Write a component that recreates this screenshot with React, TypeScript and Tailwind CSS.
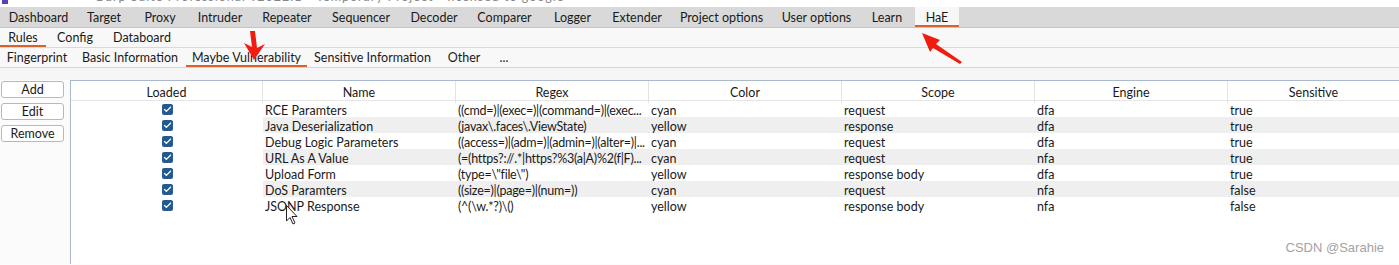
import { Check } from "lucide-react";

const mainTabs: [string, number][] = [
  ["Dashboard", 77],
  ["Target", 54],
  ["Proxy", 58],
  ["Intruder", 62],
  ["Repeater", 72],
  ["Sequencer", 76],
  ["Decoder", 70],
  ["Comparer", 71],
  ["Logger", 65],
  ["Extender", 64],
  ["Project options", 105],
  ["User options", 85],
  ["Learn", 56],
  ["HaE", 44],
];

const subTabs: [string, number][] = [
  ["Rules", 46],
  ["Config", 58],
  ["Databoard", 76],
];

const ruleTabs: [string, number][] = [
  ["Fingerprint", 74],
  ["Basic Information", 112],
  ["Maybe Vulnerability", 121],
  ["Sensitive Information", 131],
  ["Other", 52],
  ["...", 28],
];

const columns = ["Loaded", "Name", "Regex", "Color", "Scope", "Engine", "Sensitive"];

const rules = [
  ["RCE Paramters", "((cmd=)|(exec=)|(command=)|(exec...", "cyan", "request", "dfa", "true"],
  ["Java Deserialization", "(javax\\.faces\\.ViewState)", "yellow", "response", "dfa", "true"],
  ["Debug Logic Parameters", "((access=)|(adm=)|(admin=)|(alter=)|...", "cyan", "request", "dfa", "true"],
  ["URL As A Value", "(=(https?://.*|https?%3(a|A)%2(f|F)...", "cyan", "request", "nfa", "true"],
  ["Upload Form", "(type=\\\"file\\\")", "yellow", "response body", "dfa", "true"],
  ["DoS Paramters", "((size=)|(page=)|(num=))", "cyan", "request", "nfa", "false"],
  ["JSONP Response", "(^(\\w.*?)\\()", "yellow", "response body", "nfa", "false"],
];

const font = "font-['Segoe_UI','Lato',sans-serif]";

function TabRow({ tabs, active, className }: { tabs: [string, number][]; active: string; className: string }) {
  return (
    <div className={`flex ${className}`}>
      {tabs.map(([label, width]) => (
        <div
          key={label}
          className={`flex items-center justify-center border-b-2 pt-[4px] ${
            label === active ? "border-[#d9622b]" : "border-transparent"
          } ${label === "HaE" ? "bg-[#f7f7f7]" : ""}`}
          style={{ width }}
        >
          {label}
        </div>
      ))}
    </div>
  );
}

export default function App() {
  return (
    <div className={`relative h-[265px] w-[1399px] overflow-hidden bg-[#fcfcfc] text-[12.5px] text-[#1a1a1a] ${font}`}>
      <div className="h-[7px] overflow-hidden bg-white">
        <div className="-mt-[12px] flex items-center gap-2 pl-[2px] text-[#888]">
          <span className="inline-block h-[14px] w-[6px] bg-[#5b3fb5]" />
          <span className="pl-[80px] tracking-[1px]">Burp Suite Professional v2022.1 - Temporary Project - licensed to google</span>
        </div>
      </div>

      <TabRow tabs={mainTabs} active="HaE" className="h-[21px] border-b border-[#c4c4c4] bg-[#d9d9d9]" />
      <TabRow tabs={subTabs} active="Rules" className="h-[20px] border-b border-[#dadada] bg-[#f8f8f8]" />
      <TabRow tabs={ruleTabs} active="Maybe Vulnerability" className="h-[20px] border-b border-[#d6d6d6] bg-[#f8f8f8]" />

      <div className="h-[12px] bg-[#f6f6f6]" />

      <div className="flex h-[184px]">
        <div className="flex w-[70px] flex-col gap-[5px] bg-[#fbfbfb] pl-px pt-px">
          {["Add", "Edit", "Remove"].map((b) => (
            <button
              key={b}
              className="h-[17px] w-[63px] rounded-[3px] border border-[#b8b8b8] bg-white pt-px text-[12.5px] leading-none"
            >
              {b}
            </button>
          ))}
        </div>

        <div className="flex-1 border-l border-t border-[#a9b8cc] bg-white">
          <div className="grid h-[20px] grid-cols-[192px_193px_193px_193px_193px_193px_1fr] border-b border-[#e6e6e6]">
            {columns.map((c, i) => (
              <div
                key={c}
                className={`flex items-center justify-center pt-[3px] ${i < columns.length - 1 ? "border-r border-[#e3e3e3]" : ""}`}
              >
                {c}
              </div>
            ))}
          </div>
          {rules.map((r, idx) => (
            <div key={r[0]} className="grid h-[16px] grid-cols-[192px_1fr]">
              <div className="flex items-center justify-center">
                <span className="flex h-[11px] w-[11px] items-center justify-center rounded-[2px] bg-[#25598f]">
                  <Check className="h-[9px] w-[9px] text-white" strokeWidth={3.5} />
                </span>
              </div>
              <div
                className={`grid grid-cols-[193px_193px_193px_193px_193px_1fr] items-center pt-[3px] ${
                  idx % 2 === 1 ? "bg-[#efefef]" : ""
                }`}
              >
                {r.map((v, j) => (
                  <div
                    key={j}
                    className={`overflow-hidden whitespace-pre pl-[2px] leading-[13px] ${j === 1 ? "tracking-[-0.25px]" : ""}`}
                  >
                    {v}
                  </div>
                ))}
              </div>
            </div>
          ))}
        </div>
      </div>

      <div className="absolute bottom-[8px] right-[15px] font-['Liberation_Sans',sans-serif] text-[13px] text-[#a3a3a3]">
        CSDN @Sarahie
      </div>

      <svg className="pointer-events-none absolute left-0 top-0" width="1399" height="265">
        <polygon points="250,31 255,31 257,48 265,44 254,60 244,43 252,47" fill="#f01c0f" />
        <polygon points="922,33 940,40 936,44 962,62 960,64 933,48 930,52" fill="#f01c0f" />
        <path
          d="M286.5 205.5 L286.5 221 L290 217.5 L293 224 L295 223 L292 216.5 L297 216.5 Z"
          fill="white"
          stroke="#222"
          strokeWidth="1"
        />
      </svg>
    </div>
  );
}
